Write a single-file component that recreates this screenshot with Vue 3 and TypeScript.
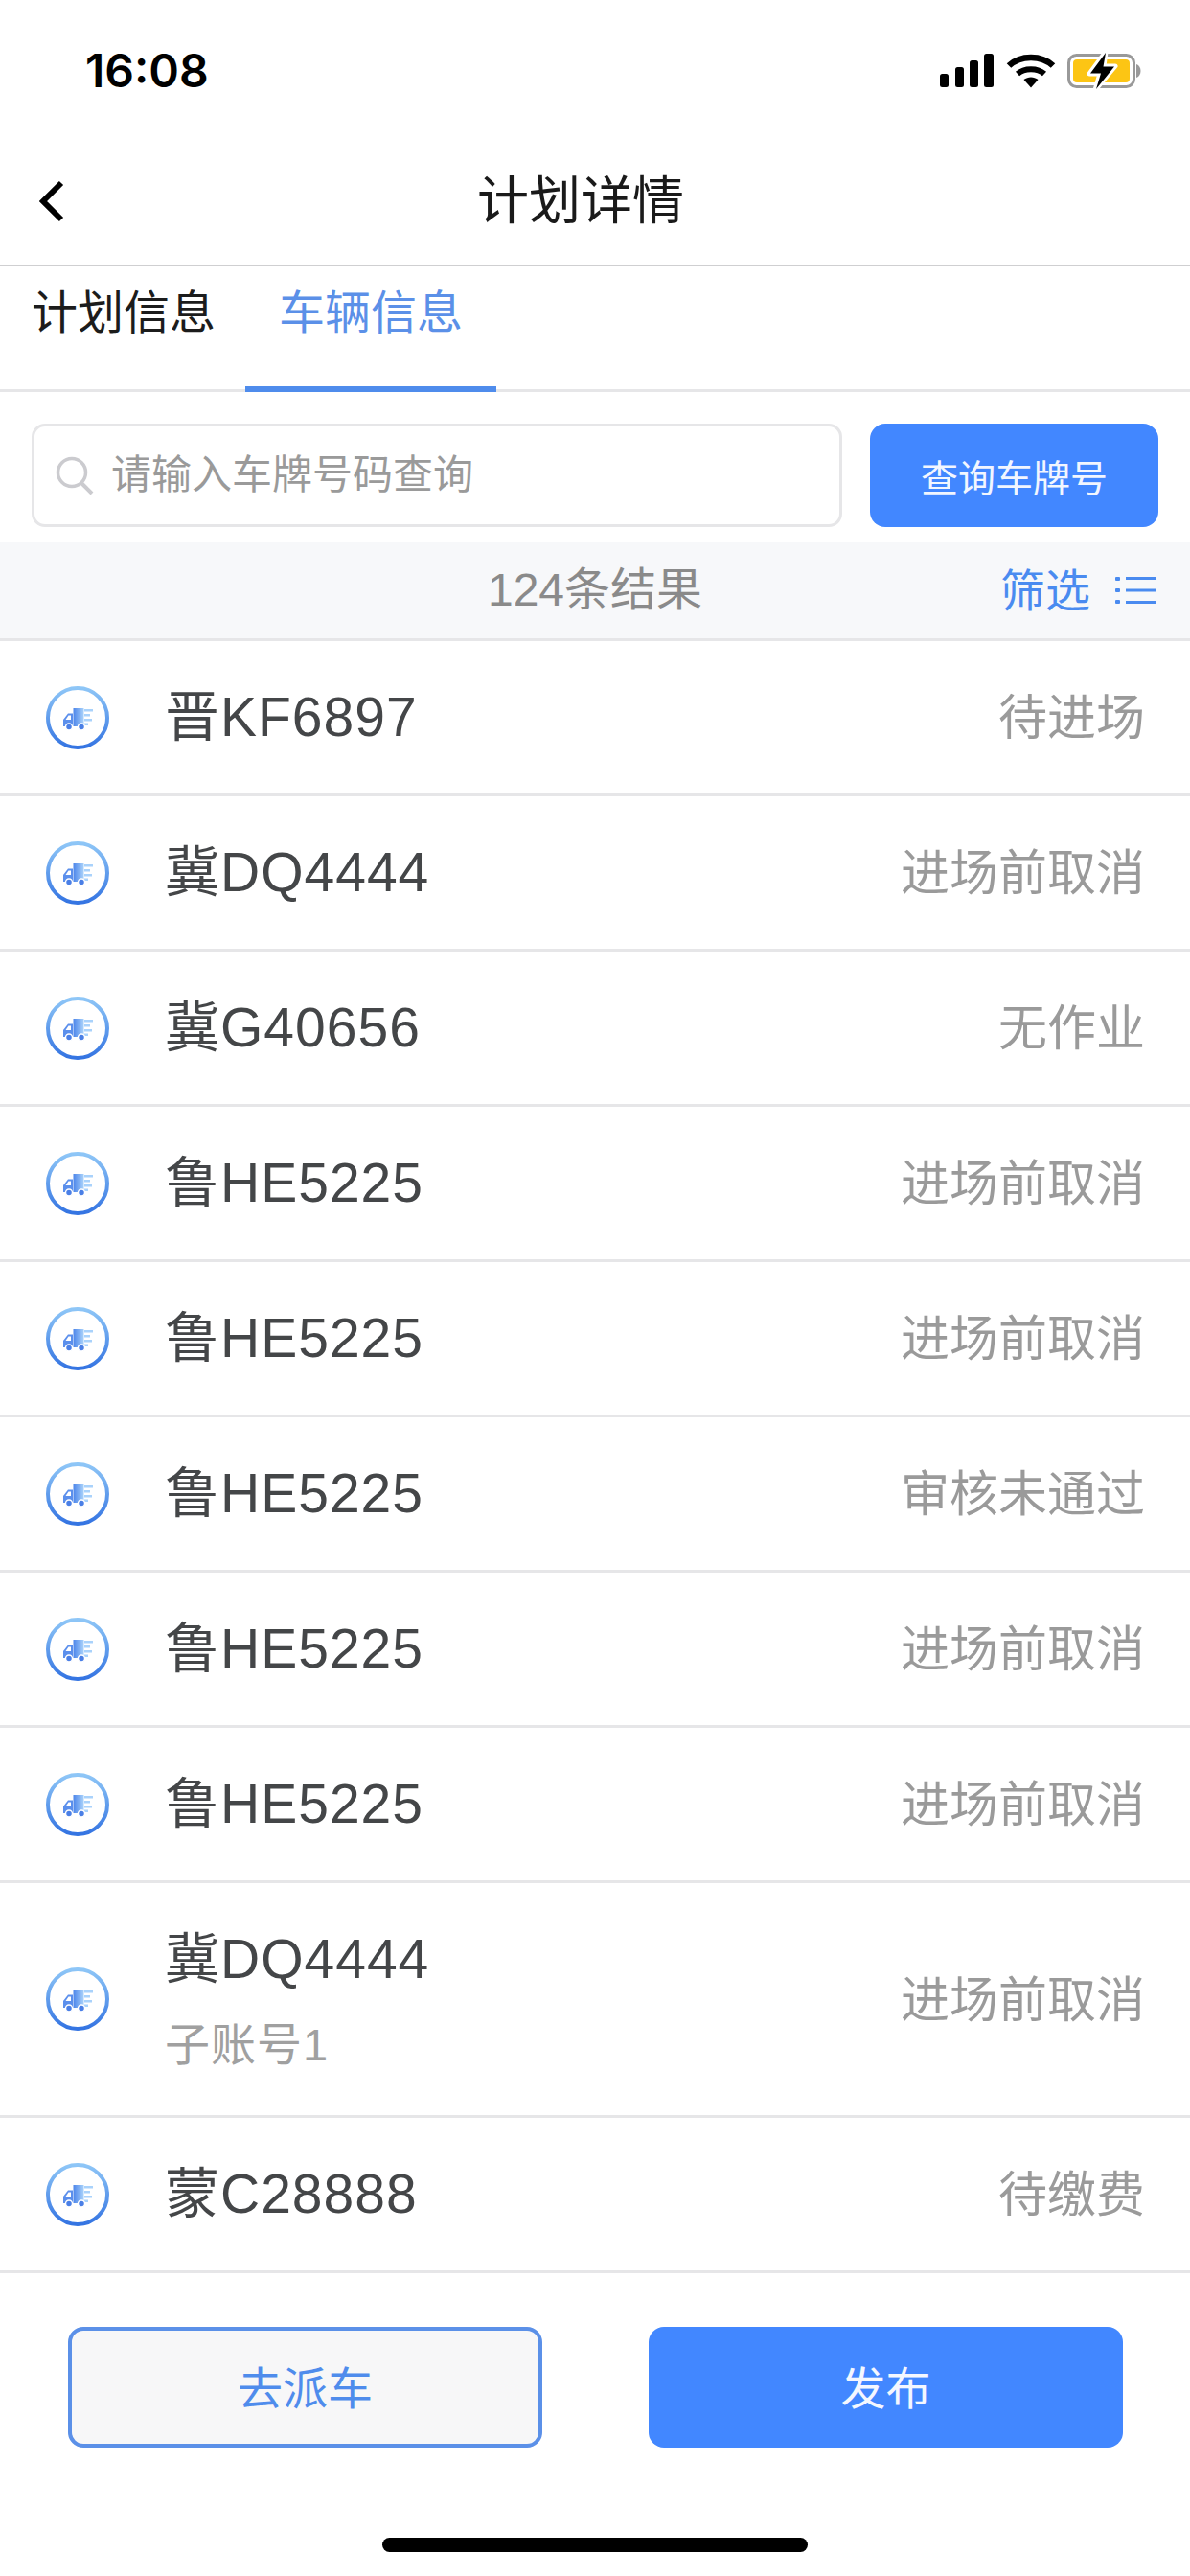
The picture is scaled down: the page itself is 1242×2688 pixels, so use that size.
<script setup lang="ts">
interface Vehicle {
  id: number
  plate: string
  status: string
  sub?: string
}

const vehicles: Vehicle[] = [
  { id: 1, plate: '晋KF6897', status: '待进场' },
  { id: 2, plate: '冀DQ4444', status: '进场前取消' },
  { id: 3, plate: '冀G40656', status: '无作业' },
  { id: 4, plate: '鲁HE5225', status: '进场前取消' },
  { id: 5, plate: '鲁HE5225', status: '进场前取消' },
  { id: 6, plate: '鲁HE5225', status: '审核未通过' },
  { id: 7, plate: '鲁HE5225', status: '进场前取消' },
  { id: 8, plate: '鲁HE5225', status: '进场前取消' },
  { id: 9, plate: '冀DQ4444', status: '进场前取消', sub: '子账号1' },
  { id: 10, plate: '蒙C28888', status: '待缴费' }
]
</script>

<template>
  <div class="page">
    <div class="status-bar">
      <span class="time">16:08</span>
      <svg class="status-icons" width="212" height="40" viewBox="0 0 212 40">
        <rect x="1" y="23" width="9" height="14" rx="2.5" />
        <rect x="17" y="16" width="9" height="21" rx="2.5" />
        <rect x="32" y="9" width="9" height="28" rx="2.5" />
        <rect x="47" y="2" width="10" height="35" rx="2.5" />
        <path d="M73 14.5 C85 3 107 3 119 14.5" fill="none" stroke="#000" stroke-width="6.5" />
        <path d="M82 23 C89 16.5 103 16.5 110 23" fill="none" stroke="#000" stroke-width="6" />
        <path d="M88.500 29 C93 25.500 99 25.500 103.500 29 L96 37.500 Z" />
        <rect x="135.500" y="3.500" width="68" height="33" rx="8" fill="none" stroke="#999" stroke-width="3" />
        <rect x="140" y="8" width="59" height="24" rx="4" fill="#fcc514" />
        <path d="M206 13 C209 14 210.500 17 210.500 20 C210.500 23 209 26 206 27 Z" fill="#999" />
        <path d="M174 0 L157 23 H168 L163 40 L184 15 H172 Z" stroke="#fff" stroke-width="5" stroke-linejoin="round" fill="#fff" />
        <path d="M174 1 L158 22.500 H169 L164 39 L183 15.500 H171.500 Z" />
      </svg>
    </div>

    <header class="nav">
      <svg class="back" width="26" height="44" viewBox="0 0 26 44">
        <path d="M23 3 L4 22 L23 41" fill="none" stroke="#000" stroke-width="6" />
      </svg>
      <h1 class="title">计划详情</h1>
    </header>

    <div class="tabs">
      <div class="tab">计划信息</div>
      <div class="tab active">车辆信息</div>
    </div>

    <div class="search-row">
      <div class="search-box">
        <svg width="40" height="40" viewBox="0 0 40 40">
          <circle cx="17" cy="17" r="14.500" fill="none" stroke="#cbcbcf" stroke-width="3.500" />
          <path d="M27 28 L38 39" stroke="#cbcbcf" stroke-width="4" />
        </svg>
        <span class="placeholder">请输入车牌号码查询</span>
      </div>
      <button class="search-btn">查询车牌号</button>
    </div>

    <div class="result-bar">
      <span></span>
      <span class="count">124条结果</span>
      <div class="filter">
        <span>筛选</span>
        <svg width="42" height="30" viewBox="0 0 42 30">
          <g fill="#4a8bf0">
            <rect x="0" y="1" width="5" height="4" rx="1" />
            <rect x="0" y="13" width="5" height="4" rx="1" />
            <rect x="0" y="25" width="5" height="4" rx="1" />
            <rect x="11" y="1" width="31" height="3" />
            <rect x="11" y="13.500" width="31" height="3" />
            <rect x="11" y="26" width="31" height="3" />
          </g>
        </svg>
      </div>
    </div>

    <ul class="list">
      <li v-for="item in vehicles" :key="item.id" class="row" :class="{ tall: item.sub }">
        <svg class="truck" width="66" height="66" viewBox="0 0 66 66">
          <defs>
            <linearGradient :id="'ring' + item.id" x1="0" y1="0" x2="0" y2="1">
              <stop offset="0" stop-color="#8ec6f7" />
              <stop offset="1" stop-color="#3474e2" />
            </linearGradient>
            <linearGradient :id="'cargo' + item.id" x1="0" y1="0" x2="1" y2="0">
              <stop offset="0" stop-color="#4d86ea" />
              <stop offset="1" stop-color="#a9d2fb" />
            </linearGradient>
          </defs>
          <circle cx="33" cy="33" r="31" fill="#fff" :stroke="'url(#ring' + item.id + ')'" stroke-width="4" />
          <path d="M18 42 V35 L23 28.500 H28 V42 Z" fill="#5b8fec" />
          <path d="M20.500 35 L23.500 30.500 H26 V35 Z" fill="#fff" />
          <rect x="28.500" y="23" width="11" height="19" :fill="'url(#cargo' + item.id + ')'" />
          <g fill="#a9d2fb">
            <rect x="40" y="24" width="9" height="2.500" />
            <rect x="40" y="29" width="6" height="2.500" />
            <rect x="40" y="34" width="8" height="2.500" />
            <rect x="40" y="38.500" width="4" height="2.500" />
          </g>
          <circle cx="24" cy="42.500" r="3.500" fill="#4a7fe6" stroke="#fff" stroke-width="1.500" />
          <circle cx="37" cy="42.500" r="3.500" fill="#4a7fe6" stroke="#fff" stroke-width="1.500" />
        </svg>
        <div class="info">
          <div class="plate">{{ item.plate }}</div>
          <div v-if="item.sub" class="sub">{{ item.sub }}</div>
        </div>
        <span class="state">{{ item.status }}</span>
      </li>
    </ul>

    <div class="actions">
      <button class="btn outline">去派车</button>
      <button class="btn solid">发布</button>
    </div>

    <div class="home-wrap"><div class="home"></div></div>
  </div>
</template>

<style>
html,
body {
  margin: 0;
  background: #fff;
}
</style>

<style scoped>
.page {
  width: 1242px;
  height: 2688px;
  display: flex;
  flex-direction: column;
  background: #fff;
  overflow: hidden;
  font-family: "Liberation Sans", "Noto Sans CJK SC", sans-serif;
}

.status-bar {
  height: 150px;
  box-sizing: border-box;
  display: flex;
  justify-content: space-between;
  align-items: center;
  padding: 0 50px 2px 89px;
}

.time {
  font-family: Inter, sans-serif;
  font-weight: 600;
  font-size: 48px;
  line-height: 1;
  color: #000;
}

.status-icons {
  margin-left: auto;
}

.nav {
  height: 128px;
  box-sizing: border-box;
  display: flex;
  align-items: center;
  padding: 0 97px 6px 41px;
  border-bottom: 2px solid #cfcfd1;
}

.back {
  flex: none;
}

.title {
  flex: 1;
  margin: 0;
  text-align: center;
  font-size: 54px;
  font-weight: 400;
  line-height: 1.2;
  color: #1a1a1a;
}

.tabs {
  height: 131px;
  box-sizing: border-box;
  display: flex;
  padding-left: 33px;
  border-bottom: 3px solid #e6e6e8;
}

.tab {
  font-size: 48px;
  line-height: 1;
  padding-top: 25px;
  color: #1c1c1c;
  margin-right: 66px;
}

.tab.active {
  position: relative;
  color: #5b90e8;
}

.tab.active::after {
  content: "";
  position: absolute;
  left: -35px;
  right: -35px;
  bottom: -3px;
  height: 6px;
  background: #4f8cec;
}

.search-row {
  display: flex;
  justify-content: space-between;
  padding: 33px 33px 16px 33px;
}

.search-box {
  width: 846px;
  height: 108px;
  box-sizing: border-box;
  display: flex;
  align-items: center;
  gap: 18px;
  padding-left: 22px;
  border: 3px solid #e6e6e8;
  border-radius: 14px;
}

.placeholder {
  font-size: 42px;
  line-height: 1;
  color: #9a9a9a;
}

.search-btn {
  width: 301px;
  height: 108px;
  border: none;
  border-radius: 16px;
  padding: 0;
  background: #4287ff;
  color: #f2f6ff;
  font-family: inherit;
  font-size: 39px;
}

.result-bar {
  height: 103px;
  box-sizing: border-box;
  display: grid;
  grid-template-columns: 1fr auto 1fr;
  align-items: center;
  background: #f7f8fa;
  border-bottom: 3px solid #e6e6e8;
}

.count {
  font-size: 48px;
  line-height: 1;
  color: #8a8a8a;
}

.filter {
  justify-self: end;
  display: flex;
  align-items: center;
  gap: 26px;
  padding-right: 36px;
  font-size: 47px;
  line-height: 1;
  color: #4a8bf0;
}

.list {
  list-style: none;
  margin: 0;
  padding: 0;
}

.row {
  height: 162px;
  box-sizing: border-box;
  display: flex;
  align-items: center;
  padding: 0 47px 0 48px;
  border-bottom: 3px solid #e6e6e8;
}

.row.tall {
  height: 245px;
}

.truck {
  flex: none;
}

.info {
  flex: 1;
  margin-left: 58px;
}

.plate {
  font-size: 57px;
  line-height: 1.2;
  color: #444648;
  letter-spacing: 1px;
}

.sub {
  margin-top: 28px;
  font-size: 47px;
  line-height: 1.2;
  color: #a0a0a0;
  letter-spacing: 1px;
}

.state {
  font-size: 51px;
  line-height: 1;
  color: #9a9a9a;
  padding-top: 2px;
}

.actions {
  display: flex;
  justify-content: space-between;
  padding: 56px 70px 0 71px;
}

.btn {
  width: 495px;
  height: 126px;
  box-sizing: border-box;
  border-radius: 16px;
  font-family: inherit;
  font-size: 47px;
  padding: 0 0 6px;
}

.outline {
  border: 4px solid #5b90e8;
  background: #f7f7f8;
  color: #4f8cec;
}

.solid {
  border: none;
  background: #4287ff;
  color: #f4f7ff;
}

.home-wrap {
  flex: 1;
  display: flex;
  justify-content: center;
  align-items: flex-end;
  padding-bottom: 25px;
}

.home {
  width: 444px;
  height: 15px;
  border-radius: 8px;
  background: #000;
}
</style>
